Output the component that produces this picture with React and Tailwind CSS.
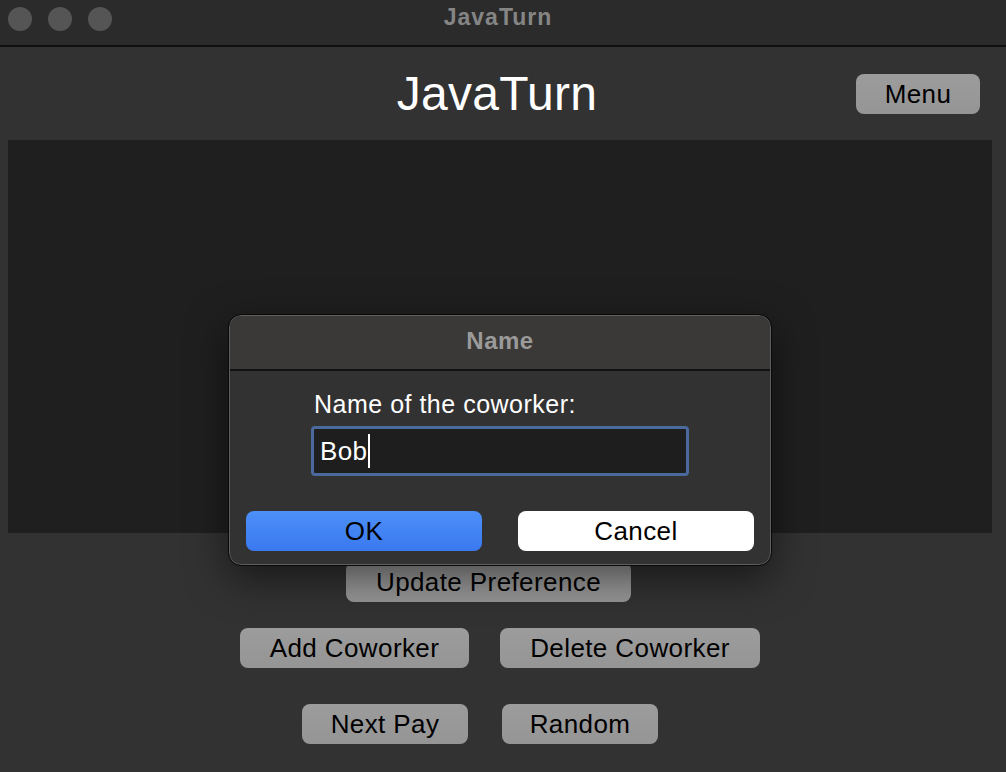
import React from 'react';

const grayBtn =
  'h-[40px] rounded-[8px] bg-gradient-to-b from-[#9c9c9c] to-[#959595] text-black text-[26px] tracking-[0.4px] leading-none flex items-center justify-center';

function TitleBar() {
  return (
    <div className="h-[47px] bg-[#2b2b2b] border-b-2 border-[#0e0e0e] flex items-center relative">
      <div className="flex items-center gap-[16px] pl-[8px] pb-[10px] pt-[2px]">
        <span className="w-[24px] h-[24px] rounded-full bg-[#555555]" />
        <span className="w-[24px] h-[24px] rounded-full bg-[#555555]" />
        <span className="w-[24px] h-[24px] rounded-full bg-[#555555]" />
      </div>
      <span className="flex-1 text-center pr-[122px] pb-[10px] text-[23px] tracking-[1px] font-bold text-[#858585]">JavaTurn</span>
    </div>
  );
}

function Dialog() {
  return (
    <div className="absolute left-[229px] top-[315px] w-[542px] h-[250px] rounded-[12px] border border-[#5e5e5e] outline outline-1 outline-[#0a0a0a] bg-[#333232] shadow-[0_12px_40px_rgba(0,0,0,0.55)] overflow-hidden flex flex-col">
      <div className="h-[55px] bg-[#3a3937] border-b-2 border-[#121212] flex items-center justify-center pb-[4px]">
        <span className="text-[24px] tracking-[0.5px] font-bold text-[#9a9a9a]">Name</span>
      </div>
      <div className="flex flex-col pl-[81px] pt-[21px]">
        <span className="pl-[3px] text-[25px] tracking-[0.5px] text-white leading-none">Name of the coworker:</span>
        <div className="mt-[9px] w-[378px] h-[50px] rounded-[4px] border-[3px] border-[#4b6a9c] bg-[#1e1e1e] flex items-center pl-[6px]">
          <span className="text-[26px] tracking-[0.4px] text-white leading-none">Bob</span>
          <span className="w-[2px] h-[34px] bg-white ml-[1px]" />
        </div>
      </div>
      <div className="flex gap-[36px] pl-[16px] mt-[35px]">
        <button className="w-[236px] h-[40px] rounded-[8px] bg-gradient-to-b from-[#4d90f8] to-[#3a78ef] text-black text-[26px] tracking-[0.4px] leading-none">OK</button>
        <button className="w-[236px] h-[40px] rounded-[8px] bg-white text-black text-[26px] tracking-[0.4px] leading-none">Cancel</button>
      </div>
    </div>
  );
}

export default function App() {
  return (
    <div
      className="w-[1006px] h-[772px] bg-[#323232] relative overflow-hidden flex flex-col"
      style={{ fontFamily: '"Liberation Sans", Arial, sans-serif' }}
    >
      <TitleBar />

      <div className="h-[93px] grid grid-cols-[1fr_auto_1fr] items-center">
        <div />
        <h1 className="text-[48px] tracking-[0.3px] text-white leading-none pr-[12px]">JavaTurn</h1>
        <div className="flex justify-end pr-[26px]">
          <button className={`${grayBtn} w-[124px] h-[39px]`}>Menu</button>
        </div>
      </div>

      <div className="ml-[8px] mr-[14px] h-[393px] bg-[#1f1f1f]" />

      <div className="flex justify-center pr-[29px] mt-[29px]">
        <button className={`${grayBtn} w-[285px] from-[#5e5e5e] to-[#6a6a6a]`}>Update Preference</button>
      </div>
      <div className="flex justify-center gap-[31px] pr-[6px] mt-[26px]">
        <button className={`${grayBtn} w-[229px]`}>Add Coworker</button>
        <button className={`${grayBtn} w-[260px]`}>Delete Coworker</button>
      </div>
      <div className="flex justify-center gap-[34px] pr-[46px] mt-[36px]">
        <button className={`${grayBtn} w-[166px]`}>Next Pay</button>
        <button className={`${grayBtn} w-[156px]`}>Random</button>
      </div>

      <Dialog />
    </div>
  );
}
